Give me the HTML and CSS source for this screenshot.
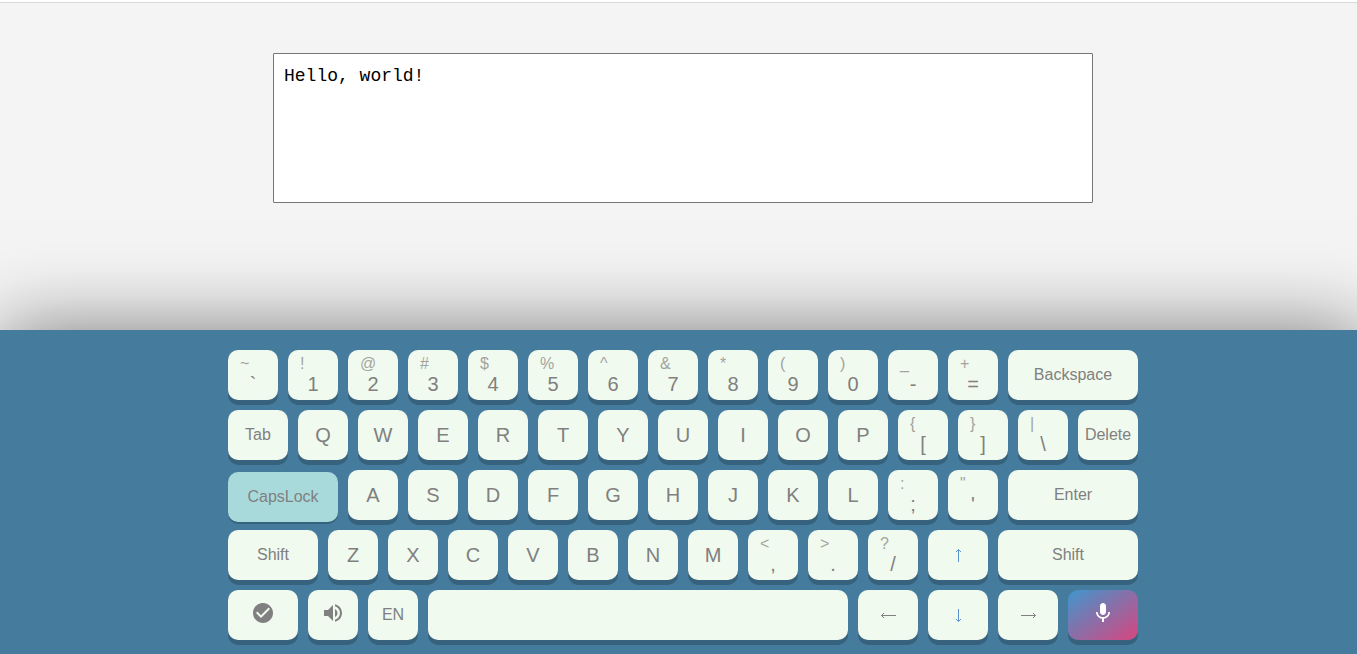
FILE: index.html
```
<!DOCTYPE html>
<html lang="en">
<head>
<meta charset="utf-8">
<title>Virtual keyboard</title>
<link rel="stylesheet" href="styles.css">
</head>
<body>
<div class="topbar"></div>
<main class="editor">
  <textarea class="text" aria-label="Text" spellcheck="false">Hello, world!</textarea>
</main>
<section class="keyboard" aria-label="Keyboard">
  <div class="keys">
    <div class="row">
      <button class="key dual"><span class="alt">~</span>`</button>
      <button class="key dual"><span class="alt">!</span>1</button>
      <button class="key dual"><span class="alt">@</span>2</button>
      <button class="key dual"><span class="alt">#</span>3</button>
      <button class="key dual"><span class="alt">$</span>4</button>
      <button class="key dual"><span class="alt">%</span>5</button>
      <button class="key dual"><span class="alt">^</span>6</button>
      <button class="key dual"><span class="alt">&amp;</span>7</button>
      <button class="key dual"><span class="alt">*</span>8</button>
      <button class="key dual"><span class="alt">(</span>9</button>
      <button class="key dual"><span class="alt">)</span>0</button>
      <button class="key dual"><span class="alt">_</span>-</button>
      <button class="key dual"><span class="alt">+</span>=</button>
      <button class="key named w130">Backspace</button>
    </div>
    <div class="row">
      <button class="key named w60">Tab</button>
      <button class="key">Q</button>
      <button class="key">W</button>
      <button class="key">E</button>
      <button class="key">R</button>
      <button class="key">T</button>
      <button class="key">Y</button>
      <button class="key">U</button>
      <button class="key">I</button>
      <button class="key">O</button>
      <button class="key">P</button>
      <button class="key dual"><span class="alt">{</span>[</button>
      <button class="key dual"><span class="alt">}</span>]</button>
      <button class="key dual"><span class="alt">|</span>\</button>
      <button class="key named w60">Delete</button>
    </div>
    <div class="row">
      <button class="key named w110 pressed" aria-pressed="true">CapsLock</button>
      <button class="key">A</button>
      <button class="key">S</button>
      <button class="key">D</button>
      <button class="key">F</button>
      <button class="key">G</button>
      <button class="key">H</button>
      <button class="key">J</button>
      <button class="key">K</button>
      <button class="key">L</button>
      <button class="key dual"><span class="alt">:</span>;</button>
      <button class="key dual"><span class="alt">"</span>'</button>
      <button class="key named w130">Enter</button>
    </div>
    <div class="row">
      <button class="key named w90">Shift</button>
      <button class="key">Z</button>
      <button class="key">X</button>
      <button class="key">C</button>
      <button class="key">V</button>
      <button class="key">B</button>
      <button class="key">N</button>
      <button class="key">M</button>
      <button class="key dual"><span class="alt">&lt;</span>,</button>
      <button class="key dual"><span class="alt">&gt;</span>.</button>
      <button class="key dual"><span class="alt">?</span>/</button>
      <button class="key w60" aria-label="Up"><svg class="arrow blue" viewBox="0 0 16 16"><path d="M8.500 15V2.500M6 5l2.500-2.500L11 5"/></svg></button>
      <button class="key named w140">Shift</button>
    </div>
    <div class="row">
      <button class="key w70" aria-label="Done"><svg class="icon" viewBox="0 0 24 24"><path d="M12 2C6.480 2 2 6.480 2 12s4.480 10 10 10 10-4.480 10-10S17.520 2 12 2zm-2 15l-5-5 1.410-1.410L10 14.170l7.590-7.590L19 8l-9 9z"/></svg></button>
      <button class="key" aria-label="Sound"><svg class="icon" viewBox="0 0 24 24"><path d="M3 9v6h4l5 5V4L7 9H3zm13.500 3c0-1.770-1.020-3.290-2.500-4.030v8.050c1.480-.73 2.500-2.250 2.500-4.020zM14 3.230v2.060c2.890.86 5 3.540 5 6.710s-2.110 5.850-5 6.710v2.060c4.010-.91 7-4.490 7-8.770s-2.990-7.860-7-8.770z"/></svg></button>
      <button class="key named">EN</button>
      <button class="key w420" aria-label="Space"></button>
      <button class="key w60" aria-label="Left"><svg class="arrow" viewBox="0 0 16 16"><path d="M16 8.500H1.500M4 6L1.500 8.500 4 11"/></svg></button>
      <button class="key w60" aria-label="Down"><svg class="arrow blue" viewBox="0 0 16 16"><path d="M8.500 2v12.500M6 12l2.500 2.500L11 12"/></svg></button>
      <button class="key w60" aria-label="Right"><svg class="arrow" viewBox="0 0 16 16"><path d="M1 8.500h14.500M13 6l2.500 2.500L13 11"/></svg></button>
      <button class="key w70 voice" aria-label="Voice input"><svg class="icon" viewBox="0 0 24 24"><path d="M12 14c1.660 0 2.990-1.340 2.990-3L15 5c0-1.660-1.340-3-3-3S9 3.340 9 5v6c0 1.660 1.340 3 3 3zm5.300-3c0 3-2.540 5.100-5.300 5.100S6.700 14 6.700 11H5c0 3.410 2.720 6.230 6 6.720V21h2v-3.280c3.280-.48 6-3.300 6-6.720h-1.700z"/></svg></button>
    </div>
  </div>
</section>
</body>
</html>
```
FILE: styles.css
```
* { box-sizing: border-box; }
body {
  margin: 0;
  min-height: 100vh;
  display: flex;
  flex-direction: column;
  overflow: hidden;
  background: #f4f4f4;
  font-family: "Liberation Sans", Arial, sans-serif;
}
.topbar {
  height: 3px;
  background: #fff;
  border-bottom: 1px solid #d8d8d8;
}
.editor {
  flex: 1;
  display: flex;
  justify-content: center;
  align-items: flex-start;
  padding: 50px 0 0 9px;
}
.text {
  width: 820px;
  height: 150px;
  padding: 10px;
  border: 1px solid #767676;
  border-radius: 1px;
  background: #fff;
  color: #000;
  font: 18px/24px "Liberation Mono", monospace;
  resize: none;
  outline: none;
}
.keyboard {
  display: flex;
  justify-content: center;
  margin-right: -9px;
  padding: 20px 0 14px;
  background: #457b9d;
  box-shadow: 0 0 75px rgba(0, 0, 0, .5);
}
.keys {
  display: flex;
  flex-direction: column;
  gap: 10px;
}
.row {
  display: flex;
  gap: 10px;
}
.key {
  position: relative;
  display: flex;
  justify-content: center;
  align-items: center;
  width: 50px;
  height: 50px;
  padding: 0;
  border: 0;
  border-radius: 10px;
  background: #f1faee;
  box-shadow: 0 5px 0 rgba(0, 0, 0, .2);
  color: #808080;
  font: 20px/24px "Liberation Sans", Arial, sans-serif;
}
.dual { padding-top: 18px; }
.alt {
  position: absolute;
  top: 4px;
  left: 12px;
  font-size: 16px;
  line-height: 20px;
  opacity: .7;
}
.named { font-size: 16px; }
.w60 { width: 60px; }
.w70 { width: 70px; }
.w90 { width: 90px; }
.w110 { width: 110px; }
.w130 { width: 130px; }
.w140 { width: 140px; }
.w420 { width: 420px; }
.pressed {
  top: 2px;
  background: #a8dadc;
  box-shadow: 0 2px 0 rgba(0, 0, 0, .2);
}
.icon {
  width: 24px;
  height: 24px;
  margin-bottom: 4px;
  fill: currentColor;
}
.arrow {
  width: 16px;
  height: 16px;
  fill: none;
  stroke: currentColor;
  stroke-width: 1;
}
.blue { stroke: #5b93cc; }
.voice {
  background: linear-gradient(to bottom right, #4096ce, #d8457f);
  color: #fff;
}
```
